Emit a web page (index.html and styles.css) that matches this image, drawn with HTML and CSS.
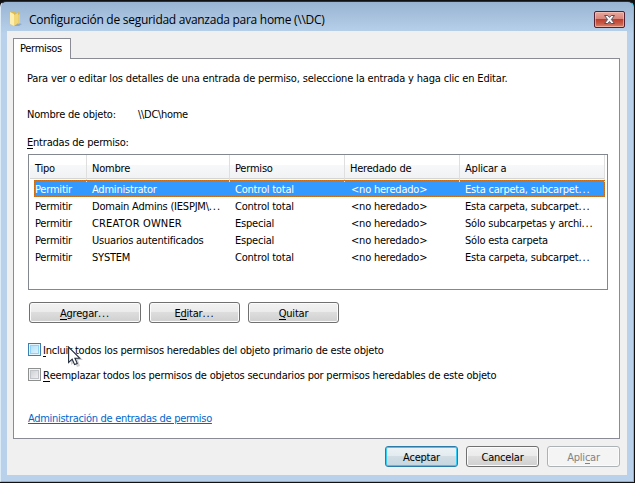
FILE: index.html
```html
<!DOCTYPE html>
<html lang="es">
<head>
<meta charset="utf-8">
<title>Configuración de seguridad avanzada</title>
<link rel="stylesheet" href="styles.css">
</head>
<body>
<div class="window">
  <header class="titlebar">
    <svg class="folder" width="14" height="18" viewBox="0 0 14 18">
      <path d="M9 13 13 14 10 16 4 16Z" fill="#7894ad" opacity=".6"/>
      <path d="M1 2 6 1 7 3 10 2V13L5 16 1 14Z" fill="#d9b954"/>
      <path d="M1 2 5 4V16L1 14Z" fill="#fbeeb0"/>
      <path d="M5 5 9 3V13L5 16Z" fill="#f1d778"/>
      <path d="M9 5 11 4V13L9 14Z" fill="#e9cd72"/>
    </svg>
    <h1 class="title"><span>Configuración de seguridad avanzada para home (\\DC)</span></h1>
    <button class="close" aria-label="Cerrar">
      <svg width="13" height="11" viewBox="0 0 13 11">
        <path d="M1.5 1.5H4.8L6.5 3.4 8.2 1.5H11.5L8.4 5.5 11.5 9.5H8.2L6.5 7.6 4.8 9.5H1.5L4.6 5.5Z" fill="#f8f8f8" stroke="#555260" stroke-width="1"/>
      </svg>
    </button>
  </header>
  <main class="client">
    <div class="tab"><span>Permisos</span></div>
    <section class="panel">
      <p class="intro"><span>Para ver o editar los detalles de una entrada de permiso, seleccione la entrada y haga clic en Editar.</span></p>
      <p class="object"><span class="object-label">Nombre de objeto:</span><span class="object-name">\\DC\home</span></p>
      <p class="list-label"><span><u>E</u>ntradas de permiso:</span></p>
      <div class="list">
        <div class="row head"><div>Tipo</div><div>Nombre</div><div>Permiso</div><div>Heredado de</div><div>Aplicar a</div></div>
        <div class="row selected"><div>Permitir</div><div>Administrator</div><div>Control total</div><div class="inh">&lt;no heredado&gt;</div><div>Esta carpeta, subcarpet<span class="dots">...</span></div></div>
        <div class="row"><div>Permitir</div><div>Domain Admins (IESPJM\<span class="dots">...</span></div><div>Control total</div><div class="inh">&lt;no heredado&gt;</div><div>Esta carpeta, subcarpet<span class="dots">...</span></div></div>
        <div class="row"><div>Permitir</div><div class="caps">CREATOR OWNER</div><div>Especial</div><div class="inh">&lt;no heredado&gt;</div><div>Sólo subcarpetas y archi<span class="dots">...</span></div></div>
        <div class="row"><div>Permitir</div><div>Usuarios autentificados</div><div>Especial</div><div class="inh">&lt;no heredado&gt;</div><div>Sólo esta carpeta</div></div>
        <div class="row"><div>Permitir</div><div>SYSTEM</div><div>Control total</div><div class="inh">&lt;no heredado&gt;</div><div>Esta carpeta, subcarpet<span class="dots">...</span></div></div>
      </div>
      <div class="actions">
        <button class="btn add"><span><u>A</u>gregar<span class="dots">...</span></span></button>
        <button class="btn edit"><span>E<u>d</u>itar<span class="dots">...</span></span></button>
        <button class="btn remove"><span><u>Q</u>uitar</span></button>
      </div>
      <div class="check hot"><i class="box"></i><span><u>I</u>ncluir todos los permisos heredables del objeto primario de este objeto</span></div>
      <div class="check"><i class="box"></i><span><u>R</u>eemplazar todos los permisos de objetos secundarios por permisos heredables de este objeto</span></div>
      <a class="link">Administración de entradas de permiso</a>
    </section>
    <footer class="footer">
      <button class="btn default"><span>Aceptar</span></button>
      <button class="btn"><span>Cancelar</span></button>
      <button class="btn disabled"><span>Apli<u>c</u>ar</span></button>
    </footer>
  </main>
</div>
<svg class="cursor" width="16" height="22" viewBox="0 0 16 22">
  <path d="M3 3V19L7 16 9 21 12 20 10 14H15Z" fill="#777" opacity=".35"/>
  <path d="M.6 1V16.5L4.2 13.2 6.6 18.6 9.2 17.4 6.9 12.2H11.7Z" fill="#fff" stroke="#222b3b" stroke-width="1.1"/>
</svg>
</body>
</html>
```

FILE: styles.css
```css
* { box-sizing: border-box; }
body {
  margin: 0;
  width: 635px;
  height: 483px;
  padding: 1px 1px 1px 0;
  background: #111;
  overflow: hidden;
  font: 11px/14px "DejaVu Sans Condensed", "DejaVu Sans", sans-serif;
  font-stretch: condensed;
  letter-spacing: -0.21px;
  color: #000;
}
p, h1 { margin: 0; font-weight: normal; }
u { text-decoration: none; border-bottom: 1px solid currentColor; display: inline-block; height: 13px; line-height: 14px; }
.window {
  height: 481px;
  padding: 0 6px 6px 6px;
  border: 1px solid #35d4f2;
  border-top: 1px solid #27313c;
  border-left-color: #dcebf8;
  border-radius: 6px 6px 0 0;
  background: linear-gradient(#98b4d2 0, #b7d0ea 30px, #b9d1ea 31px, #b9d1ea);
}
.titlebar { height: 29px; display: flex; align-items: flex-start; padding: 8px 2px 0 2px; }
.folder { flex: none; }
.title {
  flex: 1;
  margin: 1px 0 0 6px;
  font: 12px/17px "Open Sans", sans-serif;
  letter-spacing: -0.27px;
  white-space: nowrap;
}
.close {
  width: 31px;
  height: 17px;
  margin-top: 1px;
  padding: 0;
  display: flex;
  align-items: center;
  justify-content: center;
  border: 1px solid #532132;
  border-radius: 2px;
  background: linear-gradient(#e8a99f, #d98479 46%, #bd3f2c 50%, #c9604c 80%, #d98a74);
  box-shadow: inset 0 0 0 1px rgba(255, 205, 195, .55);
}
.client { height: 444px; padding: 7px 7px 0 6px; background: #f0f0f0; }
.tab {
  position: relative;
  width: 58px;
  height: 21px;
  margin-bottom: -1px;
  padding: 3px 0 0 6px;
  border: 1px solid #898c95;
  border-bottom: 0;
  background: #fff;
  letter-spacing: -0.3px;
}
.panel {
  height: 381px;
  padding: 13px 11px 0 13px;
  border: 1px solid #898c95;
  background: #fff;
  white-space: nowrap;
}
.intro { letter-spacing: -0.17px; }
.object { display: flex; margin-top: 22px; }
.object-label { width: 111px; }
.object-name { letter-spacing: -0.3px; }
.list-label { margin-top: 14px; }
.list {
  height: 136px;
  margin: 4px 0 0 1px;
  padding: 0 2px 0 1px;
  border: 1px solid #828790;
}
.row {
  display: grid;
  grid-template-columns: 52px 143px 115px 115px 1fr;
  height: 17px;
  margin-left: 4px;
  padding-left: 1px;
  line-height: 19px;
}
.row > div { padding-left: 5px; }
.row > div:first-child { padding-left: 0; }
.row > .inh { padding-left: 6px; }
.row > .caps { letter-spacing: 0.15px; }
.dots { letter-spacing: 0.9px; }
.head {
  height: 24px;
  margin: 0 0 1px 0;
  grid-template-columns: 56px 143px 115px 115px 1fr;
  line-height: 27px;
  border-bottom: 1px solid #d5d5d5;
  background: linear-gradient(#fff 0, #fff 42%, #f7f8fa 43%, #f1f2f4);
}
.head > div, .head > div:first-child { border-right: 1px solid #dfdfdf; }
.head > div:first-child { padding-left: 4px; }
.selected { outline: 1px dotted #cc6b12; outline-offset: -1px; background: #39f; color: #fff; }
.actions { display: flex; gap: 8px; margin: 12px 0 0 2px; }
.btn {
  width: 73px;
  height: 21px;
  padding: 2px 0 0;
  border: 1px solid #707070;
  border-radius: 3px;
  background: linear-gradient(#f2f2f2, #ebebeb 48%, #ddd 50%, #cfcfcf);
  box-shadow: inset 0 0 0 1px #fbfbfb;
  font: inherit;
  letter-spacing: inherit;
  color: #000;
}
.add { width: 112px; }
.edit { width: 91px; }
.remove { width: 91px; }
.check { display: flex; height: 13px; margin: 12px 0 0 1px; line-height: 16px; }
.check u { line-height: 14px; }
.actions + .check { margin-top: 20px; }
.box {
  width: 13px;
  height: 13px;
  margin-right: 2px;
  border: 1px solid #8e8f8f;
  background: linear-gradient(135deg, #c6cacf, #f6f6f6);
  box-shadow: inset 0 0 0 1px #f4f4f4, inset 0 0 0 2px #c0c3c8;
}
.hot .box { border-color: #3c7fb1; background: linear-gradient(135deg, #a6dbf8, #ecf8fe); box-shadow: inset 0 0 0 1px #e4f4fd, inset 0 0 0 2px #93d2f5; }
.link { display: block; width: max-content; margin: 31px 0 0 1px; letter-spacing: -0.3px; color: #0066cc; text-decoration: underline; }
.footer { display: flex; justify-content: flex-end; gap: 8px; margin-top: 7px; }
.default { border-color: #2c7aa8; background: linear-gradient(#edf3f7, #e2ebf0 48%, #d1dce3 50%, #c6d7e1); box-shadow: inset 0 0 0 1px #35cdf5; }
.disabled { border-color: #adb2b5; background: #f4f4f4; color: #838383; }
.cursor { position: absolute; left: 68px; top: 346px; }
```
